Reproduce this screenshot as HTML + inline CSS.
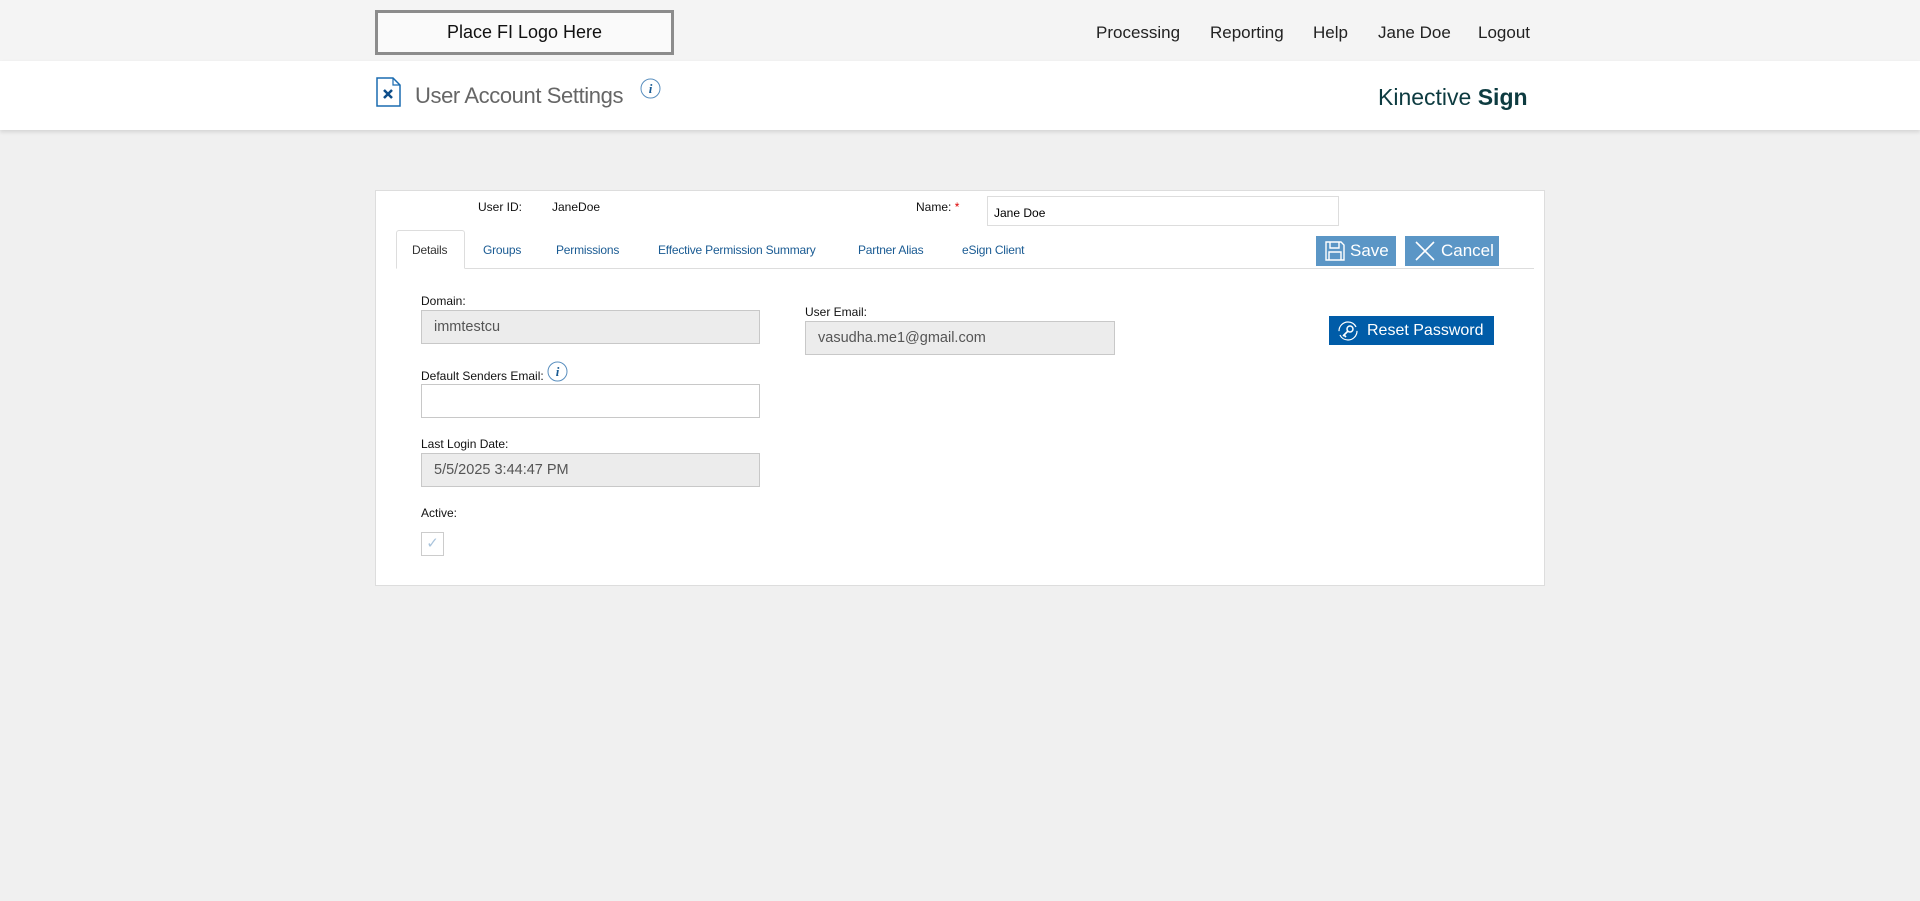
<!DOCTYPE html>
<html><head><meta charset="utf-8"><style>
*{box-sizing:border-box;margin:0;padding:0}
body{width:1920px;height:901px;background:#f0f0f0;font-family:"Liberation Sans",sans-serif;position:relative;overflow:hidden}
.a{position:absolute;white-space:nowrap}
.top{left:0;top:0;width:1920px;height:61px;background:#f4f4f4}
.hdr{left:0;top:61px;width:1920px;height:69px;background:#fff;box-shadow:0 2px 4px rgba(0,0,0,.12)}
.logo{left:375px;top:10px;width:299px;height:45px;border:3px solid #8c8c8c;background:#fafafa;font-size:18px;color:#111;text-align:center;line-height:39px}
.nav{top:23px;font-size:17px;color:#222}
.card{left:375px;top:190px;width:1170px;height:396px;background:#fff;border:1px solid #ddd}
.lbl{font-size:12px;color:#111}
.tab{top:243px;font-size:12px;color:#1a5b93;letter-spacing:-0.2px}
.inp{border:1px solid #c8c8c8;background:#ececec;font-size:14.5px;color:#555;padding-left:12px;display:flex;align-items:center}
.btn{background:#5b96c6;color:#fff;font-size:17px;display:flex;align-items:center;padding-left:8px}
</style></head><body>
<div class="a top"></div>
<div class="a hdr"></div>
<div class="a logo">Place FI Logo Here</div>
<div class="a nav" style="left:1096px">Processing</div>
<div class="a nav" style="left:1210px">Reporting</div>
<div class="a nav" style="left:1313px">Help</div>
<div class="a nav" style="left:1378px">Jane Doe</div>
<div class="a nav" style="left:1478px">Logout</div>

<svg class="a" style="left:376px;top:77px" width="26" height="30" viewBox="0 0 26 30"><path d="M1 1H17L24 8V29H1Z" fill="#fff" stroke="#1a6bb0" stroke-width="1.5"/><path d="M17 1V8H24" fill="none" stroke="#1a6bb0" stroke-width="1.2"/><path d="M8 13L16 21M16 13L8 21" stroke="#0d4d8a" stroke-width="2.5"/></svg>
<div class="a" style="left:415px;top:83px;font-size:22px;color:#666;letter-spacing:-0.4px">User Account Settings</div>
<svg class="a" style="left:640px;top:78px" width="21" height="21"><circle cx="10.5" cy="10.5" r="9.5" fill="#fff" stroke="#5a8fbf"/><text x="10.5" y="15" font-family="Liberation Serif" font-style="italic" font-weight="bold" font-size="13" fill="#1a5b93" text-anchor="middle">i</text></svg>
<div class="a" style="left:1378px;top:84px;font-size:23px;color:#0d3b40">Kinective <b>Sign</b></div>

<div class="a card"></div>
<div class="a lbl" style="left:478px;top:200px">User ID:</div>
<div class="a lbl" style="left:552px;top:200px">JaneDoe</div>
<div class="a lbl" style="left:916px;top:200px">Name: <span style="color:#d00">*</span></div>
<div class="a" style="left:987px;top:196px;width:352px;height:30px;border:1px solid #ddd;font-size:12px;padding:9px 6px">Jane Doe</div>

<div class="a" style="left:396px;top:268px;width:1138px;height:1px;background:#ddd"></div>
<div class="a" style="left:396px;top:230px;width:69px;height:39px;border:1px solid #ddd;border-bottom:1px solid #fff;border-radius:3px 3px 0 0;background:#fff"></div>
<div class="a tab" style="left:412px;color:#333">Details</div>
<div class="a tab" style="left:483px">Groups</div>
<div class="a tab" style="left:556px">Permissions</div>
<div class="a tab" style="left:658px">Effective Permission Summary</div>
<div class="a tab" style="left:858px">Partner Alias</div>
<div class="a tab" style="left:962px">eSign Client</div>

<div class="a btn" style="left:1316px;top:236px;width:80px;height:30px"><svg width="22" height="22" viewBox="0 0 22 22"><path d="M2 2H17L20 5V20H2Z" fill="none" stroke="#fff" stroke-width="1.4"/><path d="M6 2V8H15V2M5 20V12H17V20" fill="none" stroke="#fff" stroke-width="1.4"/></svg><span style="margin-left:4px">Save</span></div>
<div class="a btn" style="left:1405px;top:236px;width:94px;height:30px"><svg width="24" height="24"><path d="M3 3L21 21M21 3L3 21" stroke="#fff" stroke-width="1.6"/></svg><span style="margin-left:4px">Cancel</span></div>

<div class="a lbl" style="left:421px;top:294px">Domain:</div>
<div class="a inp" style="left:421px;top:310px;width:339px;height:34px">immtestcu</div>
<div class="a lbl" style="left:421px;top:369px">Default Senders Email:</div>
<svg class="a" style="left:547px;top:361px" width="21" height="21"><circle cx="10.5" cy="10.5" r="9.5" fill="#fff" stroke="#5a8fbf"/><text x="10.5" y="15" font-family="Liberation Serif" font-style="italic" font-weight="bold" font-size="13" fill="#1a5b93" text-anchor="middle">i</text></svg>
<div class="a inp" style="left:421px;top:384px;width:339px;height:34px;background:#fff"></div>
<div class="a lbl" style="left:421px;top:437px">Last Login Date:</div>
<div class="a inp" style="left:421px;top:453px;width:339px;height:34px">5/5/2025 3:44:47 PM</div>
<div class="a lbl" style="left:421px;top:506px">Active:</div>
<div class="a" style="left:421px;top:532px;width:23px;height:24px;border:1px solid #ccc;color:#aac4dc;font-size:15px;text-align:center;line-height:22px">✓</div>

<div class="a lbl" style="left:805px;top:305px">User Email:</div>
<div class="a inp" style="left:805px;top:321px;width:310px;height:34px">vasudha.me1@gmail.com</div>

<div class="a btn" style="left:1329px;top:316px;width:165px;height:29px;background:#005ca8;padding-left:8px"><svg width="22" height="22" viewBox="0 0 22 22"><circle cx="11" cy="11" r="9" fill="none" stroke="#fff" stroke-width="1.2" stroke-dasharray="24 4"/><circle cx="13" cy="9" r="3" fill="none" stroke="#fff" stroke-width="1.5"/><path d="M11 11L6 16M7 15L9 17" stroke="#fff" stroke-width="1.6"/></svg><span style="margin-left:8px;font-size:16px">Reset Password</span></div>
</body></html>
